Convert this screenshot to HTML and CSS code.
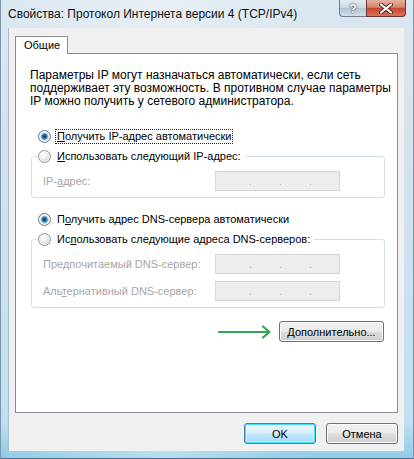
FILE: index.html
```html
<!DOCTYPE html>
<html lang="ru">
<head>
<meta charset="utf-8">
<title>Свойства: Протокол Интернета версии 4 (TCP/IPv4)</title>
<link rel="stylesheet" href="styles.css">
</head>
<body>
<div class="window">
  <div class="titlebar">
    <div class="title">Свойства: Протокол Интернета версии 4 (TCP/IPv4)</div>
    <div class="caption-btns">
      <div class="cbtn help">?</div>
      <div class="cbtn close">
        <svg width="14" height="11" viewBox="0 0 14 11"><path d="M2 1.5 L12 9.5 M12 1.5 L2 9.5" stroke="#4a2a26" stroke-width="4" stroke-linecap="round"/><path d="M2 1.5 L12 9.5 M12 1.5 L2 9.5" stroke="#ffffff" stroke-width="2.2" stroke-linecap="round"/></svg>
      </div>
    </div>
  </div>
  <div class="client">
    <div class="tabs"><div class="tab">Общие</div></div>
    <div class="panel">
      <p class="intro">Параметры IP могут назначаться автоматически, если сеть<br>поддерживает эту возможность. В противном случае параметры<br>IP можно получить у сетевого администратора.</p>

      <div class="opt first"><span class="radio on"></span><span class="lbl focus"><u>П</u>олучить IP-адрес автоматически</span></div>
      <fieldset class="group g1">
        <legend class="opt"><span class="radio"></span><span class="lbl"><u>И</u>спользовать следующий IP-адрес:</span></legend>
        <div class="field"><span class="flbl">IP-<u>а</u>дрес:</span><span class="ip"><i>.</i><i>.</i><i>.</i></span></div>
      </fieldset>

      <div class="opt third"><span class="radio on"></span><span class="lbl">П<u>о</u>лучить адрес DNS-сервера автоматически</span></div>
      <fieldset class="group g2">
        <legend class="opt"><span class="radio"></span><span class="lbl">Ис<u>п</u>ользовать следующие адреса DNS-серверов:</span></legend>
        <div class="field"><span class="flbl">Пре<u>д</u>почитаемый DNS-сервер:</span><span class="ip"><i>.</i><i>.</i><i>.</i></span></div>
        <div class="field"><span class="flbl">Аль<u>т</u>ернативный DNS-сервер:</span><span class="ip"><i>.</i><i>.</i><i>.</i></span></div>
      </fieldset>

      <div class="adv-row">
        <svg class="arrow" width="54" height="14" viewBox="0 0 54 14"><path d="M1 7 H51 M45 1.5 L51.5 7 L45 12.5" fill="none" stroke="#2ea652" stroke-width="2.2" stroke-linecap="round" stroke-linejoin="round"/></svg>
        <button class="btn adv">Дополнительно...</button>
      </div>
    </div>
    <div class="footer">
      <button class="btn default">OK</button>
      <button class="btn">Отмена</button>
    </div>
  </div>
</div>
</body>
</html>
```
FILE: styles.css
```css
html, body {
  margin: 0;
  padding: 0;
  background: #c9dceb;
}
body {
  font-family: "Liberation Sans", Arial, sans-serif;
  font-size: 12px;
  color: #000;
}
.window {
  width: 414px;
  height: 459px;
  box-sizing: border-box;
  background:
    linear-gradient(90deg, rgba(255,255,255,0) 0%, rgba(255,255,255,0.35) 40%, rgba(255,255,255,0) 75%),
    linear-gradient(180deg, #dbe7f0 0%, #d3e2ed 40%, #bfe0f0 92%, #8fcbe8 100%);
  border-left: 1px solid #7d95ab;
  border-right: 1px solid #7d95ab;
  border-bottom: 1px solid #4f6f8c;
  display: flex;
  flex-direction: column;
}
.titlebar {
  height: 28px;
  display: flex;
  justify-content: space-between;
  align-items: flex-start;
  padding: 0 7px 0 7px;
  flex: none;
}
.title {
  line-height: 29px;
  font-size: 12px;
  color: #111;
  white-space: nowrap;
}
.caption-btns {
  display: flex;
}
.cbtn {
  height: 17px;
  box-sizing: border-box;
  display: flex;
  align-items: center;
  justify-content: center;
}
.help {
  width: 27px;
  border: 1px solid #6c7e90;
  border-top: none;
  border-right: none;
  border-radius: 0 0 0 4px;
  background: linear-gradient(180deg, #e4ecf2 0%, #cbd8e3 48%, #b3c5d4 52%, #d2dee8 100%);
  color: #fff;
  font-weight: bold;
  font-size: 13px;
  text-shadow: 0 0 2px #2f3f50, 0 0 1px #2f3f50;
}
.close {
  width: 40px;
  border: 1px solid #6a3b35;
  border-top: none;
  border-radius: 0 0 4px 0;
  background: linear-gradient(180deg, #e8b0a3 0%, #d98470 45%, #c5472f 52%, #d9715a 100%);
}
.client {
  margin: 0 9px 0 7px;
  height: 423px;
  flex: none;
  background: #f0f0f0;
  border-left: 1px solid #a9bccb;
  box-sizing: border-box;
  display: flex;
  flex-direction: column;
  padding-top: 8px;
}
.tabs {
  display: flex;
  padding-left: 6px;
  height: 17px;
  flex: none;
}
.tab {
  position: relative;
  z-index: 1;
  height: 18px;
  box-sizing: border-box;
  border: 1px solid #898c95;
  border-bottom: none;
  background: #fff;
  padding: 0 7px 0 8px;
  line-height: 17px;
  font-size: 11px;
}
.panel {
  margin: 0 6px 0 6px;
  height: 360px;
  flex: none;
  box-sizing: border-box;
  border: 1px solid #898c95;
  background: #fff;
  padding: 15px 12px 0 14px;
  display: flex;
  flex-direction: column;
}
.intro {
  margin: 0;
  line-height: 13px;
  white-space: nowrap;
}
.opt {
  display: flex;
  align-items: center;
  height: 16px;
}
.opt.first {
  margin: 20px 0 0 8px;
}
.opt.third {
  margin: 13px 0 0 8px;
}
.radio {
  width: 13px;
  height: 13px;
  box-sizing: border-box;
  border-radius: 50%;
  border: 1px solid #8e9296;
  background: radial-gradient(circle at 40% 35%, #ffffff 0, #f2f2f2 3px, #d6d6d6 7px);
  box-shadow: inset 0 0 0 1px rgba(255,255,255,0.8);
  flex: none;
}
.radio.on {
  border-color: #5c7a96;
  background:
    radial-gradient(circle at 50% 50%, #0d2c4a 0, #1f5a8f 1.5px, #4d95cf 2.8px, #a8d2ee 3.6px, rgba(255,255,255,0) 4.2px),
    radial-gradient(circle at 40% 35%, #ffffff 0, #f2f2f2 3px, #d6d6d6 7px);
}
.lbl {
  margin-left: 4px;
  font-size: 11px;
  line-height: 13px;
  padding: 0 1px;
  border: 1px solid transparent;
  white-space: nowrap;
}
.lbl.focus {
  border: 1px dotted #222;
}
.group {
  margin: 4px 0 0 1px;
  padding: 7px 44px 6px 11px;
  border: 1px solid #d5dfe5;
  border-radius: 3px;
  min-width: 0;
}
.group legend {
  padding: 0 2px 0 0;
  margin-left: -5px;
}
.field {
  display: flex;
  align-items: center;
  justify-content: space-between;
  height: 20px;
  color: #a5a5a5;
  font-size: 11px;
}
.field + .field {
  margin-top: 7px;
}
.flbl {
  white-space: nowrap;
}
.ip {
  width: 125px;
  height: 20px;
  box-sizing: border-box;
  border: 1px solid #d6d6d6;
  background: #ededed;
  display: flex;
  align-items: flex-end;
  padding: 0 0 3px 33px;
  gap: 27px;
  color: #a8a8a8;
}
.ip i {
  font-style: normal;
  font-size: 10px;
  line-height: 10px;
  width: 3px;
}
.adv-row {
  display: flex;
  align-items: center;
  justify-content: flex-end;
  margin-top: 13px;
  padding-right: 1px;
  gap: 7px;
}
.arrow {
  display: block;
}
.btn {
  font-family: "Liberation Sans", Arial, sans-serif;
  font-size: 11px;
  color: #000;
  height: 21px;
  box-sizing: border-box;
  border: 1px solid #707070;
  border-radius: 3px;
  background: linear-gradient(180deg, #f2f2f2 0%, #ebebeb 48%, #dddddd 52%, #cfcfcf 100%);
  box-shadow: inset 0 0 0 1px #fcfcfc;
  padding: 0;
  margin: 0;
}
.btn.adv {
  width: 105px;
}
.footer {
  display: flex;
  justify-content: flex-end;
  gap: 10px;
  margin-top: 10px;
  padding-right: 6px;
}
.footer .btn {
  width: 72px;
}
.btn.default {
  border-color: #3c7fb1;
  background: linear-gradient(180deg, #eaf6fd 0%, #d9f0fc 48%, #bee6fd 52%, #a7d9f5 100%);
  box-shadow: inset 0 0 0 1px #48d8fb, inset 0 0 0 2px rgba(255,255,255,0.4);
}
```
